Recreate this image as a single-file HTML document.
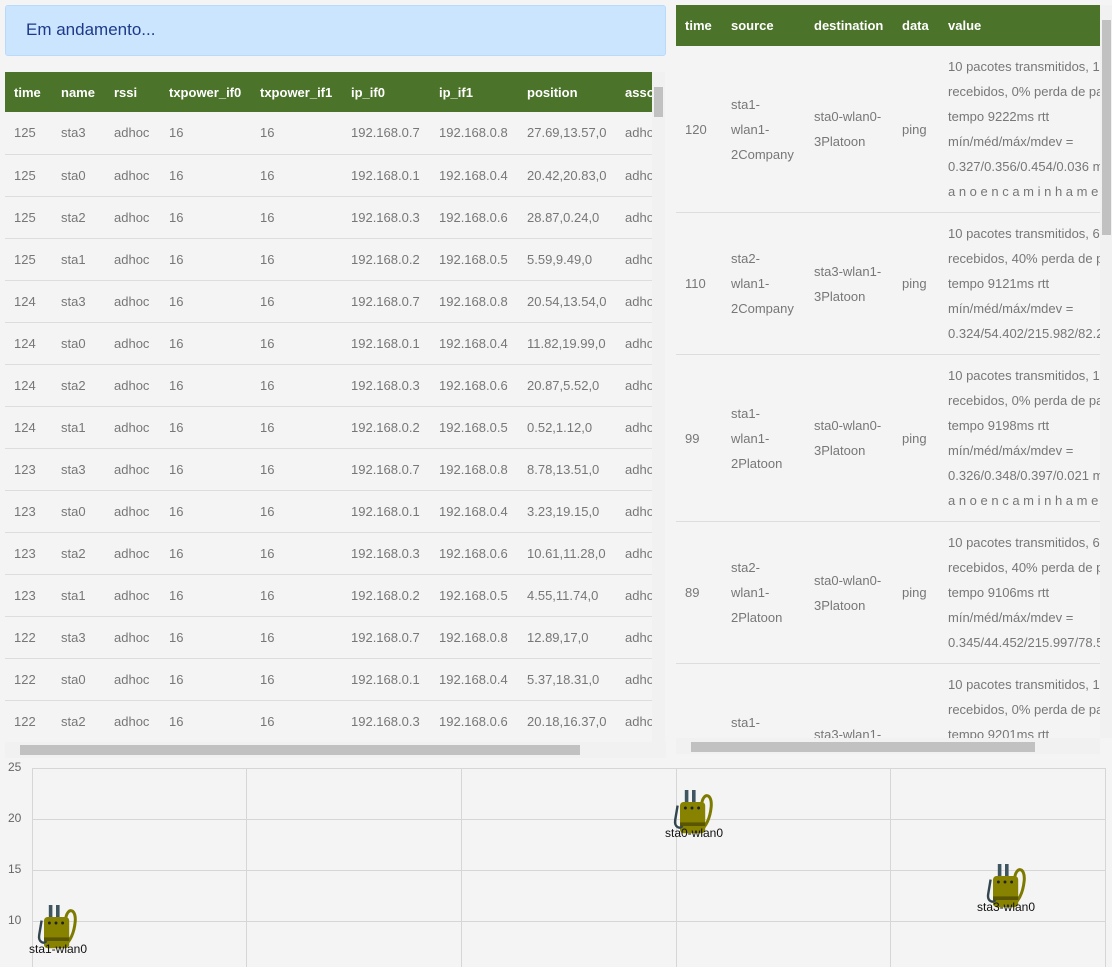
<!DOCTYPE html>
<html><head><meta charset="utf-8"><style>
*{box-sizing:border-box;margin:0;padding:0}
body{width:1112px;height:967px;background:#f4f4f4;font-family:"Liberation Sans",sans-serif;font-size:13px;color:#777;position:relative;overflow:hidden}
.alert{position:absolute;left:5px;top:5px;width:661px;height:51px;background:#cce5ff;border:1px solid #b8daff;border-radius:3px;color:#1d3a8a;font-family:"Liberation Sans",sans-serif;font-size:17px;padding:14px 20px}
.box{position:absolute;overflow:hidden}
table{border-collapse:collapse;table-layout:fixed}
th{background:#4b7329;color:#fff;font-weight:bold;text-align:left;height:41px;padding-left:9px;white-space:nowrap;overflow:hidden}
#L th{height:40px}
td{padding-left:9px;white-space:nowrap;overflow:hidden;border-bottom:1px solid #ddd}
#L td{height:42px}
#R td{line-height:25px;padding-top:8px;padding-bottom:8px;vertical-align:middle}
.sb{position:absolute;background:#f1f1f1}
.th{position:absolute;background:#c1c1c1}
.ax{position:absolute;font-size:12px;color:#666}
.lbl{position:absolute;font-size:12px;color:#111}
</style></head><body>
<div class="alert">Em andamento...</div>

<div class="box" style="left:5px;top:72px;width:647px;height:670px">
<table id="L" style="width:720px">
<colgroup><col style="width:47px"><col style="width:53px"><col style="width:55px"><col style="width:91px"><col style="width:91px"><col style="width:88px"><col style="width:88px"><col style="width:98px"><col style="width:109px"></colgroup>
<tr><th>time</th><th>name</th><th>rssi</th><th>txpower_if0</th><th>txpower_if1</th><th>ip_if0</th><th>ip_if1</th><th>position</th><th>associatedTo</th></tr>
<tr><td>125</td><td>sta3</td><td>adhoc</td><td>16</td><td>16</td><td>192.168.0.7</td><td>192.168.0.8</td><td>27.69,13.57,0</td><td>adhoc</td></tr>
<tr><td>125</td><td>sta0</td><td>adhoc</td><td>16</td><td>16</td><td>192.168.0.1</td><td>192.168.0.4</td><td>20.42,20.83,0</td><td>adhoc</td></tr>
<tr><td>125</td><td>sta2</td><td>adhoc</td><td>16</td><td>16</td><td>192.168.0.3</td><td>192.168.0.6</td><td>28.87,0.24,0</td><td>adhoc</td></tr>
<tr><td>125</td><td>sta1</td><td>adhoc</td><td>16</td><td>16</td><td>192.168.0.2</td><td>192.168.0.5</td><td>5.59,9.49,0</td><td>adhoc</td></tr>
<tr><td>124</td><td>sta3</td><td>adhoc</td><td>16</td><td>16</td><td>192.168.0.7</td><td>192.168.0.8</td><td>20.54,13.54,0</td><td>adhoc</td></tr>
<tr><td>124</td><td>sta0</td><td>adhoc</td><td>16</td><td>16</td><td>192.168.0.1</td><td>192.168.0.4</td><td>11.82,19.99,0</td><td>adhoc</td></tr>
<tr><td>124</td><td>sta2</td><td>adhoc</td><td>16</td><td>16</td><td>192.168.0.3</td><td>192.168.0.6</td><td>20.87,5.52,0</td><td>adhoc</td></tr>
<tr><td>124</td><td>sta1</td><td>adhoc</td><td>16</td><td>16</td><td>192.168.0.2</td><td>192.168.0.5</td><td>0.52,1.12,0</td><td>adhoc</td></tr>
<tr><td>123</td><td>sta3</td><td>adhoc</td><td>16</td><td>16</td><td>192.168.0.7</td><td>192.168.0.8</td><td>8.78,13.51,0</td><td>adhoc</td></tr>
<tr><td>123</td><td>sta0</td><td>adhoc</td><td>16</td><td>16</td><td>192.168.0.1</td><td>192.168.0.4</td><td>3.23,19.15,0</td><td>adhoc</td></tr>
<tr><td>123</td><td>sta2</td><td>adhoc</td><td>16</td><td>16</td><td>192.168.0.3</td><td>192.168.0.6</td><td>10.61,11.28,0</td><td>adhoc</td></tr>
<tr><td>123</td><td>sta1</td><td>adhoc</td><td>16</td><td>16</td><td>192.168.0.2</td><td>192.168.0.5</td><td>4.55,11.74,0</td><td>adhoc</td></tr>
<tr><td>122</td><td>sta3</td><td>adhoc</td><td>16</td><td>16</td><td>192.168.0.7</td><td>192.168.0.8</td><td>12.89,17,0</td><td>adhoc</td></tr>
<tr><td>122</td><td>sta0</td><td>adhoc</td><td>16</td><td>16</td><td>192.168.0.1</td><td>192.168.0.4</td><td>5.37,18.31,0</td><td>adhoc</td></tr>
<tr><td>122</td><td>sta2</td><td>adhoc</td><td>16</td><td>16</td><td>192.168.0.3</td><td>192.168.0.6</td><td>20.18,16.37,0</td><td>adhoc</td></tr>
<tr><td>122</td><td>sta1</td><td>adhoc</td><td>16</td><td>16</td><td>192.168.0.2</td><td>192.168.0.5</td><td>1.1,1.1,0</td><td>adhoc</td></tr>
</table></div>
<div class="sb" style="left:652px;top:72px;width:13px;height:670px"></div>
<div class="th" style="left:654px;top:87px;width:9px;height:30px"></div>
<div class="sb" style="left:5px;top:742px;width:661px;height:16px"></div>
<div class="th" style="left:20px;top:745px;width:560px;height:10px"></div>

<div class="box" style="left:676px;top:5px;width:424px;height:733px">
<table id="R" style="width:470px">
<colgroup><col style="width:46px"><col style="width:83px"><col style="width:88px"><col style="width:46px"><col style="width:207px"></colgroup>
<tr><th>time</th><th>source</th><th>destination</th><th>data</th><th>value</th></tr>
<tr><td>120</td><td>sta1-<br>wlan1-<br>2Company</td><td>sta0-wlan0-<br>3Platoon</td><td>ping</td><td>10 pacotes transmitidos, 10<br>recebidos, 0% perda de pacotes<br>tempo 9222ms rtt<br>mín/méd/máx/mdev =<br>0.327/0.356/0.454/0.036 ms<br>a n o e n c a m i n h a m e n t o</td></tr>
<tr><td>110</td><td>sta2-<br>wlan1-<br>2Company</td><td>sta3-wlan1-<br>3Platoon</td><td>ping</td><td>10 pacotes transmitidos, 6<br>recebidos, 40% perda de pacotes<br>tempo 9121ms rtt<br>mín/méd/máx/mdev =<br>0.324/54.402/215.982/82.2 ms</td></tr>
<tr><td>99</td><td>sta1-<br>wlan1-<br>2Platoon</td><td>sta0-wlan0-<br>3Platoon</td><td>ping</td><td>10 pacotes transmitidos, 10<br>recebidos, 0% perda de pacotes<br>tempo 9198ms rtt<br>mín/méd/máx/mdev =<br>0.326/0.348/0.397/0.021 ms<br>a n o e n c a m i n h a m e n t o</td></tr>
<tr><td>89</td><td>sta2-<br>wlan1-<br>2Platoon</td><td>sta0-wlan0-<br>3Platoon</td><td>ping</td><td>10 pacotes transmitidos, 6<br>recebidos, 40% perda de pacotes<br>tempo 9106ms rtt<br>mín/méd/máx/mdev =<br>0.345/44.452/215.997/78.5 ms</td></tr>
<tr><td>79</td><td>sta1-<br>wlan1-<br>2Platoon</td><td>sta3-wlan1-<br>3Platoon</td><td>ping</td><td>10 pacotes transmitidos, 10<br>recebidos, 0% perda de pacotes<br>tempo 9201ms rtt<br>mín/méd/máx/mdev =<br>0.3/0.3/0.4/0.0 ms<br>a n o e n c a m i n h a m e n t o</td></tr>
</table></div>
<div class="sb" style="left:1100px;top:5px;width:12px;height:733px"></div>
<div class="th" style="left:1102px;top:20px;width:9px;height:215px"></div>
<div class="sb" style="left:676px;top:738px;width:424px;height:16px"></div>
<div class="th" style="left:691px;top:742px;width:344px;height:10px"></div>

<svg style="position:absolute;left:0;top:758px" width="1112" height="209">
<g stroke="#d6d6d6" stroke-width="1">
<line x1="32" y1="10.5" x2="1105" y2="10.5"/><line x1="32" y1="61.5" x2="1105" y2="61.5"/><line x1="32" y1="112.5" x2="1105" y2="112.5"/><line x1="32" y1="163.5" x2="1105" y2="163.5"/>
<line x1="32.5" y1="10" x2="32.5" y2="209"/><line x1="246.5" y1="10" x2="246.5" y2="209"/><line x1="461.5" y1="10" x2="461.5" y2="209"/><line x1="676.5" y1="10" x2="676.5" y2="209"/><line x1="890.5" y1="10" x2="890.5" y2="209"/><line x1="1105.5" y1="10" x2="1105.5" y2="209"/>
</g>
<defs><g id="ic">
<rect x="9" y="0" width="3" height="11" fill="#3f5560"/><rect x="15" y="0" width="3" height="11" fill="#3f5560"/>
<path d="M23 12 C24 2 32 2 31 14 C30 24 27 30 22 34" fill="none" stroke="#7d7a00" stroke-width="2.5"/>
<rect x="5" y="10" width="21" height="26" rx="3" fill="#878200"/>
<circle cx="9.5" cy="15" r="1.2" fill="#222"/><circle cx="15" cy="15" r="1.2" fill="#222"/><circle cx="20.5" cy="15" r="1.2" fill="#222"/>
<rect x="5" y="27" width="21" height="3" fill="#5a5500"/>
<path d="M3 13 L1 25 C0 31 5 33 7 30" fill="none" stroke="#33464f" stroke-width="2"/>
</g></defs>
<use href="#ic" transform="translate(38,147) scale(1.2)"/>
<use href="#ic" transform="translate(674,32) scale(1.2)"/>
<use href="#ic" transform="translate(987,106) scale(1.2)"/>
</svg>
<div class="ax" style="left:8px;top:760px">25</div>
<div class="ax" style="left:8px;top:811px">20</div>
<div class="ax" style="left:8px;top:862px">15</div>
<div class="ax" style="left:8px;top:913px">10</div>
<div class="lbl" style="left:29px;top:942px">sta1-wlan0</div>
<div class="lbl" style="left:665px;top:826px">sta0-wlan0</div>
<div class="lbl" style="left:977px;top:900px">sta3-wlan0</div>
</body></html>
